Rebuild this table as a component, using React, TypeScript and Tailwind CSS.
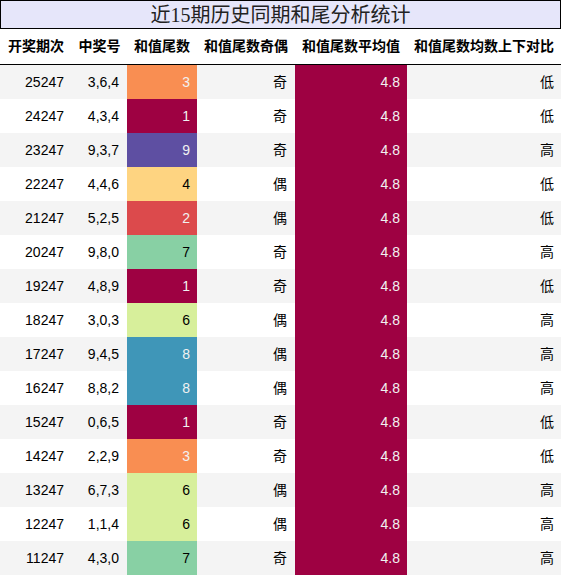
import React from "react";

const rows: [string, string, number, string, string][] = [
  ["25247", "3,6,4", 3, "奇", "低"],
  ["24247", "4,3,4", 1, "奇", "低"],
  ["23247", "9,3,7", 9, "奇", "高"],
  ["22247", "4,4,6", 4, "偶", "低"],
  ["21247", "5,2,5", 2, "偶", "低"],
  ["20247", "9,8,0", 7, "奇", "高"],
  ["19247", "4,8,9", 1, "奇", "低"],
  ["18247", "3,0,3", 6, "偶", "高"],
  ["17247", "9,4,5", 8, "偶", "高"],
  ["16247", "8,8,2", 8, "偶", "高"],
  ["15247", "0,6,5", 1, "奇", "低"],
  ["14247", "2,2,9", 3, "奇", "低"],
  ["13247", "6,7,3", 6, "偶", "高"],
  ["12247", "1,1,4", 6, "偶", "高"],
  ["11247", "4,3,0", 7, "奇", "高"],
];

const cellColor: Record<number, string> = {
  1: "bg-[#9e0142] text-[#f1f1f1]",
  2: "bg-[#dc4a4c] text-[#f1f1f1]",
  3: "bg-[#f98e52] text-[#f1f1f1]",
  4: "bg-[#fed481] text-black",
  6: "bg-[#d7ef9b] text-black",
  7: "bg-[#88d0a4] text-black",
  8: "bg-[#3f96b8] text-[#f1f1f1]",
  9: "bg-[#5e4fa2] text-[#f1f1f1]",
};

const grid = "grid grid-cols-[72px_55px_70px_98px_112px_154px]";
const headers = ["开奖期次", "中奖号", "和值尾数", "和值尾数奇偶", "和值尾数平均值", "和值尾数均数上下对比"];

export default function App() {
  return (
    <div
      className="w-[562px] h-[576px] bg-white text-black"
      style={{ fontFamily: '"Liberation Sans", "Noto Sans CJK SC", sans-serif' }}
    >
      <div
        className="w-[561px] h-[29px] border border-black bg-[#e6e6fa] flex items-center justify-center text-[20px] leading-none text-[#222]"
        style={{ fontFamily: '"Liberation Serif", "Noto Sans CJK SC", serif' }}
      >
        近15期历史同期和尾分析统计
      </div>
      <div className={`${grid} h-[36px] border-b border-black w-[561px]`}>
        {headers.map((h) => (
          <div key={h} className="flex items-center justify-center text-[14px] font-bold">
            {h}
          </div>
        ))}
      </div>
      {rows.map((r, i) => (
        <div
          key={r[0]}
          className={`${grid} h-[34px] w-[561px] text-[14px] ${i % 2 === 0 ? "bg-[#f4f4f4]" : "bg-white"}`}
        >
          <div className="flex items-center justify-end pr-[8px]">{r[0]}</div>
          <div className="flex items-center justify-end pr-[8px]">{r[1]}</div>
          <div className={`flex items-center justify-end pr-[7px] ${cellColor[r[2]]}`}>{r[2]}</div>
          <div className="flex items-center justify-end pr-[8px]">{r[3]}</div>
          <div className="flex items-center justify-end pr-[7px] bg-[#9e0142] text-[#f1f1f1]">4.8</div>
          <div className="flex items-center justify-end pr-[7px]">{r[4]}</div>
        </div>
      ))}
    </div>
  );
}
